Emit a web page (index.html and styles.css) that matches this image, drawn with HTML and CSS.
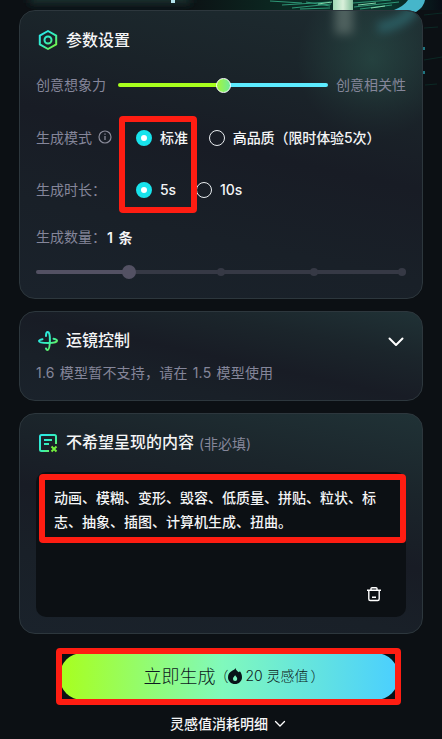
FILE: index.html
```html
<!DOCTYPE html>
<html lang="zh">
	<head>
		<meta charset="UTF-8" />
		<meta name="viewport" content="width=device-width, initial-scale=1.0" />
		<title>视频生成</title>
		<link rel="stylesheet" href="styles.css">
	</head>
	<body>
		<svg class="hero" viewBox="0 0 442 300" aria-hidden="true">
			<defs>
				<linearGradient id="fade" x1="0" x2="1">
					<stop offset="0" stop-color="#0c1013" />
					<stop offset="0.4" stop-color="#0b2922" />
					<stop offset="0.8" stop-color="#0a362d" />
					<stop offset="1" stop-color="#080d15" />
				</linearGradient>
				<linearGradient id="beam" x1="0" x2="1">
					<stop offset="0" stop-color="#9fd9b4" />
					<stop offset="0.5" stop-color="#d9efda" />
					<stop offset="1" stop-color="#80bd99" />
				</linearGradient>
				<radialGradient id="haze">
					<stop offset="0" stop-color="#2f6054" />
					<stop offset="1" stop-color="#2f6054" stop-opacity="0" />
				</radialGradient>
				<clipPath id="top-clip"><rect width="442" height="10" /></clipPath>
				<clipPath id="card-clip"><rect x="20" y="11" width="402" height="287" rx="15" /></clipPath>
				<filter id="soft" x="-200%" y="-200%" width="500%" height="500%"><feGaussianBlur stdDeviation="5" /></filter>
				<filter id="glow" x="-20%" y="-200%" width="140%" height="500%"><feGaussianBlur stdDeviation="4" /></filter>
			</defs>
			<path d="M180 0h262v10H180z" fill="url(#fade)" />
			<g clip-path="url(#top-clip)">
				<path d="M30 -6h160v9H30z" fill="#1c3934" filter="url(#glow)" />
			</g>
			<path d="M171 0h4v3h-4z" fill="#b5e4ee" />
			<g fill="none" stroke="#2e9776" stroke-width="1">
				<path d="M270 1l32 2M282 5l48-3M292 8l39-4M306 2l24 4M353 3l38-3M354 7l45-5M360 9l32-4M300 9l30-1" />
				<path d="M318 4l14-2M358 5l18-2M371 8l14-2" stroke="#82d7aa" />
			</g>
			<path d="M423 47h2v3h-2zM423 71h2v3h-2z" fill="#1f7580" />
			<path d="M424 15l18-2M424 28l14-1M424 60l18-3M425 85l12-1" stroke="#0b2925" />
			<path d="M333 0h20v10h-20z" fill="url(#beam)" />
			<path d="M394 10Q404 6 408 0h17q-1 7-9 12-6-2-12-2z" fill="#46b6ca" />
			<g clip-path="url(#card-clip)">
				<path d="M20 10h403v290H20z" fill="#1a2429" />
				<ellipse cx="372" cy="60" rx="75" ry="80" fill="url(#haze)" />
				<path d="M335 -4h18v38h-18z" fill="#8da397" filter="url(#soft)" />
				<path d="M378 28q27-5 36-20" fill="none" stroke="#3a9aa0" stroke-width="11" filter="url(#soft)" />
			</g>
		</svg>

		<main class="container">
			<section class="card params">
				<div class="card-title">
					<svg class="title-icon" viewBox="0 0 24 24">
						<defs>
							<linearGradient id="brand" gradientUnits="userSpaceOnUse" x1="3" y1="3" x2="21" y2="21">
								<stop offset="0.2" stop-color="#2de9e0" />
								<stop offset="0.55" stop-color="#36efb4" />
								<stop offset="0.9" stop-color="#7cf43c" />
							</linearGradient>
						</defs>
						<g fill="none" stroke="url(#brand)" stroke-width="2" stroke-linejoin="round">
							<path d="M12 3l8.2 4.6v8.8L12 21l-8.2-4.6V7.600z" />
							<circle cx="12" cy="12" r="3.5" />
						</g>
					</svg>
					<h2>参数设置</h2>
				</div>

				<div class="slider-row">
					<span class="label">创意想象力</span>
					<div class="slider"><span class="slider-thumb"></span></div>
					<span class="label">创意相关性</span>
				</div>

				<div class="options">
					<div class="option-row mode">
						<span class="label">生成模式</span>
						<svg class="info" viewBox="0 0 14 14" fill="none" stroke="#8a8b9a">
							<circle cx="7" cy="7" r="6" stroke-width="1.2" />
							<path d="M7 6v4M7 3.500v1.300" stroke-width="1.300" />
						</svg>
						<label class="radio checked"><i></i>标准</label>
						<label class="radio"><i></i>高品质（限时体验5次）</label>
					</div>
					<div class="option-row duration">
						<span class="label">生成时长：</span>
						<label class="radio checked"><i></i>5s</label>
						<label class="radio"><i></i>10s</label>
					</div>
					<div class="mark mark-options"></div>
				</div>

				<div class="count">
					<span class="label">生成数量：</span>
					<strong>1 条</strong>
				</div>
				<div class="steps">
					<span class="steps-thumb"></span>
					<i></i>
					<i></i>
					<i></i>
				</div>
			</section>

			<section class="card camera">
				<div class="card-title">
					<svg class="title-icon" viewBox="0 0 24 24" fill="none" stroke="url(#brand)" stroke-width="2" stroke-linecap="round" stroke-linejoin="round">
						<path d="M10 7C10 4.400 10.600 3 11.700 3c1.700 0 2.400 4 2.200 9-.2 5.500-.9 9-2.300 9-.8 0-1.300-.6-1.600-1.600" />
						<path d="M6.500 10.200C4.500 10.600 3 11.200 3 12c0 1.300 4 2 9 2s9-.9 9-2.300c0-.8-1.500-1.500-3.500-1.900" />
					</svg>
					<h2>运镜控制</h2>
					<svg class="chevron" viewBox="0 0 16 10"><path d="M1.500 1.500L8 8l6.500-6.500" /></svg>
				</div>
				<p class="label">1.6 模型暂不支持，请在 1.5 模型使用</p>
			</section>

			<section class="card negative">
				<div class="card-title">
					<svg class="title-icon" viewBox="0 0 24 24" fill="none" stroke="url(#brand)" stroke-width="2">
						<path d="M20 13V5.500Q20 4 18.500 4h-13Q4 4 4 5.500v13Q4 20 5.500 20H13" />
						<path d="M8 9h8M8 13h5" />
						<path d="M15.500 15.500l5 5M20.500 15.500l-5 5" stroke="#74f03d" />
					</svg>
					<h2>不希望呈现的内容</h2>
					<span class="optional">(非必填)</span>
				</div>
				<div class="textbox">
					<p>动画、模糊、变形、毁容、低质量、拼贴、粒状、标志、抽象、插图、计算机生成、扭曲。</p>
					<svg class="trash" viewBox="0 0 16 16" fill="none" stroke="#fff" stroke-width="1.400">
						<path d="M1 4.300h14M5 4V2.600Q5 1.700 6 1.700h4q1 0 1 .9V4M2.800 4.500V13q0 1.500 1.500 1.500h7.400q1.500 0 1.500-1.500V4.500M6 11.200h4" />
					</svg>
					<div class="mark mark-text"></div>
				</div>
			</section>

			<div class="submit">
				<button>
					<span class="submit-text">立即生成</span>
					<span class="paren">（</span>
					<svg class="flame" viewBox="0 0 14 16">
						<path fill-rule="evenodd" d="M7.500 0c.3 2.200 2 3.100 3.400 4.200l1-.9C13.200 5 14 7 14 9.200 14 13 11 16 7 16s-7-3-7-6.800C0 6 1.900 4.300 3.800 3.100 5.500 2.100 6.900 1.300 7.500 0zM7.200 7.300C6.400 8.400 5 9.300 5 11a2.100 2.100 0 0 0 4.200 0c0-1.700-1.200-2.400-2-3.700z" />
					</svg>
					<span class="cost">20 灵感值</span>
					<span class="paren-end">）</span>
				</button>
				<div class="mark mark-submit"></div>
			</div>

			<a class="detail">
				灵感值消耗明细
				<svg viewBox="0 0 12 8"><path d="M1.500 1.500L6 6l4.500-4.500" /></svg>
			</a>
		</main>
	</body>
</html>
```

FILE: styles.css
```css
* {
	box-sizing: border-box;
}
body {
	margin: 0;
	height: 739px;
	overflow: hidden;
	position: relative;
	font-family: Inter, "Noto Sans CJK SC", sans-serif;
	font-size: 14px;
	color: #f4f5f6;
	background-color: #0c1014;
}
h2,
p {
	margin: 0;
}
svg {
	display: block;
	flex: none;
}
.hero {
	position: absolute;
	top: 0;
	left: 0;
	width: 442px;
	height: 300px;
	pointer-events: none;
}
.container {
	position: relative;
	display: flex;
	flex-direction: column;
	gap: 12px;
	padding: 10px 19px 0;
}
.card {
	padding: 16px;
	border: 1px solid #2d373d;
	border-radius: 16px;
	background: linear-gradient(192deg, #203236 0%, #1b252b 27%, #181c25 51%, #192028 73%, #1a222b 100%);
}
.params {
	height: 289px;
	background: linear-gradient(192deg, #20323690 0%, #1b252b90 24%, #181c25 48%, #192028 73%, #1a222b 100%);
}
.card-title {
	display: flex;
	align-items: center;
	height: 26px;
}
.title-icon {
	width: 24px;
	height: 24px;
	margin-right: 6px;
}
.card-title h2 {
	font-size: 16px;
	line-height: 24px;
	font-weight: 500;
}
.camera h2 {
	margin-bottom: 2px;
}
.label {
	color: #85869a;
	line-height: 20px;
	white-space: nowrap;
}
.slider-row {
	display: flex;
	align-items: center;
	justify-content: space-between;
	height: 20px;
	margin-top: 22px;
}
.slider {
	display: flex;
	align-items: center;
	justify-content: center;
	width: 210px;
	height: 4px;
	margin-left: 4px;
	border-radius: 2px;
	background: linear-gradient(90deg, #a8ff1d 50%, #5cebff 50%);
}
.slider-thumb {
	width: 15px;
	height: 15px;
	border: 1.5px solid #fff;
	border-radius: 50%;
	background: linear-gradient(90deg, #a4f63a, #70eb9a);
}
.options {
	position: relative;
	display: flex;
	flex-direction: column;
	gap: 32px;
	margin-top: 33px;
}
.option-row {
	display: flex;
	align-items: center;
	height: 20px;
}
.info {
	width: 14px;
	height: 14px;
	margin: 0 24px 3px 6px;
}
.radio {
	display: flex;
	align-items: center;
	gap: 8px;
	font-weight: 500;
	line-height: 20px;
	letter-spacing: -0.1px;
	white-space: nowrap;
}
.radio i {
	width: 16px;
	height: 16px;
	border: 1px solid #e9edf0;
	border-radius: 50%;
}
.radio.checked i {
	border: 5px solid #18e3ec;
	background-color: #fff;
}
.radio + .radio {
	margin-left: 21px;
}
.duration .label {
	width: 100px;
}
.duration .radio + .radio {
	margin-left: 20px;
}
.mark {
	position: absolute;
	border: 6px solid #ff1d12;
	border-radius: 4px;
	pointer-events: none;
}
.mark-options {
	top: -12px;
	left: 83px;
	width: 78px;
	height: 97px;
}
.count {
	display: flex;
	align-items: center;
	height: 20px;
	margin-top: 27px;
}
.count strong {
	margin: 0 0 1px 1px;
	font-weight: 600;
	word-spacing: 2px;
}
.steps {
	display: flex;
	align-items: center;
	justify-content: flex-end;
	gap: 85px;
	height: 4px;
	margin-top: 23px;
	border-radius: 2px;
	background: linear-gradient(90deg, #535163 25%, #363945 25%);
}
.steps-thumb {
	width: 14px;
	height: 14px;
	margin-right: -4px;
	border-radius: 50%;
	background-color: #535163;
}
.steps i {
	width: 8px;
	height: 8px;
	border-radius: 50%;
	background-color: #363945;
}
.steps i:last-child {
	margin-left: -5px;
}
.camera {
	height: 90px;
}
.camera .label {
	margin-top: 9px;
	word-spacing: 1px;
	letter-spacing: 0.2px;
}
.chevron {
	width: 16px;
	height: 10px;
	margin: 2px 2px 0 auto;
	fill: none;
	stroke: #fff;
	stroke-width: 2;
	stroke-linecap: round;
	stroke-linejoin: round;
}
.negative {
	height: 221px;
}
.negative h2 {
	margin-bottom: 2px;
}
.optional {
	margin: 0 0 1px 5px;
	color: #85869a;
}
.textbox {
	position: relative;
	display: flex;
	flex-direction: column;
	justify-content: space-between;
	height: 145px;
	margin-top: 16px;
	padding: 14px 18px 15px;
	border-radius: 10px;
	background-color: #0c1014;
	line-height: 24px;
	font-weight: 500;
}
.trash {
	width: 16px;
	height: 16px;
	margin-right: 6px;
	align-self: flex-end;
}
.mark-text {
	top: 2px;
	left: 3px;
	width: 367px;
	height: 69px;
}
.submit {
	position: relative;
	align-self: center;
	width: 345px;
	height: 57px;
	margin: 2px 0 0 15px;
	padding: 5px 3px 5px 4px;
}
.submit button {
	display: flex;
	align-items: center;
	justify-content: center;
	width: 100%;
	height: 100%;
	padding: 0 0 2px 10px;
	border: none;
	border-radius: 22px;
	font-family: inherit;
	color: #0d1a20;
	background: linear-gradient(90deg, #a8ff1d, #80f9bc 48%, #4acfff);
	cursor: pointer;
}
.submit-text {
	margin-bottom: 2px;
	font-size: 18px;
	font-weight: 300;
}
.paren,
.paren-end,
.cost {
	margin-bottom: 1px;
	font-size: 14px;
	font-weight: 300;
}
.paren {
	margin-left: -1px;
}
.paren-end {
	margin-left: 2px;
}
.flame {
	width: 14px;
	height: 16px;
	margin-right: 3px;
	fill: #071419;
}
.mark-submit {
	inset: 0;
}
.detail {
	display: flex;
	align-items: center;
	align-self: center;
	gap: 6px;
	height: 20px;
	margin: -3px 0 0 14px;
	font-weight: 500;
	line-height: 20px;
}
.detail svg {
	width: 12px;
	height: 8px;
	fill: none;
	stroke: #fff;
	stroke-width: 1.3;
	stroke-linecap: round;
}
```
